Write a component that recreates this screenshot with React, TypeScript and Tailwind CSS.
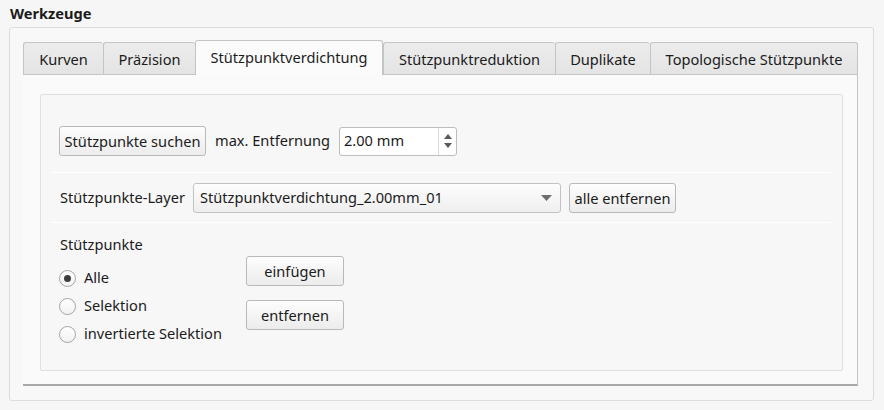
import React from "react";

const tabs = [
  { label: "Kurven", w: "w-[80px]" },
  { label: "Präzision", w: "w-[92px]" },
  { label: "Stützpunktverdichtung", w: "w-[188px]", active: true },
  { label: "Stützpunktreduktion", w: "w-[172px]" },
  { label: "Duplikate", w: "w-[95px]" },
  { label: "Topologische Stützpunkte", w: "w-[208px]", last: true },
];

function Btn({ children, className = "" }: { children: React.ReactNode; className?: string }) {
  return (
    <button
      className={`flex items-center justify-center rounded-[3px] border border-[#b9b9b9] bg-gradient-to-b from-[#fdfdfd] to-[#ececec] leading-none text-[#1b1b1b] ${className}`}
    >
      {children}
    </button>
  );
}

function Radio({ label, checked }: { label: string; checked?: boolean }) {
  return (
    <div className="flex h-[28px] items-center">
      <span className="flex h-[17px] w-[17px] items-center justify-center rounded-full border border-[#a3a3a3] bg-gradient-to-b from-[#ffffff] to-[#f2f2f2]">
        {checked && <span className="h-[7px] w-[7px] rounded-full bg-[#3d3d3d]" />}
      </span>
      <span className="ml-[8px]">{label}</span>
    </div>
  );
}

export default function App() {
  return (
    <div className="h-[410px] w-[884px] overflow-hidden bg-[#f6f6f6] font-['Noto_Sans',sans-serif] text-[14.6px] text-[#1b1b1b]">
      <div className="h-[27px] pl-[10px] pt-[3px] font-bold leading-[20px]">Werkzeuge</div>

      <div className="ml-[9px] h-[374px] w-[865px] rounded-[3px] border border-[#dcdcdc] bg-[#f8f8f8] pl-[13px] pt-[12px]">
        {/* tab bar */}
        <div className="flex h-[34px] items-end">
          {tabs.map((t) =>
            t.active ? (
              <div
                key={t.label}
                className={`relative z-10 -mb-px flex h-[35px] ${t.w} items-start justify-center rounded-t-[3px] border border-b-0 border-[#c4c4c4] bg-[#fbfbfb] pt-[6px] leading-[20px]`}
              >
                {t.label}
              </div>
            ) : (
              <div
                key={t.label}
                className={`flex h-[32px] ${t.w} items-center justify-center rounded-t-[3px] border-l border-t border-[#c4c4c4] bg-gradient-to-b from-[#ececec] to-[#e4e4e4] pt-[3px] ${t.last ? "border-r" : ""}`}
              >
                {t.label}
              </div>
            )
          )}
        </div>

        {/* tab pane */}
        <div className="h-[312px] w-[835px] border-r border-t border-[#c4c4c4] border-b-2 border-b-[#a9a9a9] bg-[#fafafa] pl-[17px] pt-[19px]">
          <div className="h-[277px] w-[803px] rounded-[2px] border border-[#e0e0e0] bg-[#f7f7f7] pt-[31px]">
            {/* row 1 */}
            <div className="flex h-[30px] items-center pl-[18px]">
              <Btn className="h-[30px] w-[147px]">Stützpunkte suchen</Btn>
              <span className="ml-[9px]">max. Entfernung</span>
              <div className="ml-auto mr-[385px] flex h-[29px] w-[118px] items-stretch rounded-[3px] border border-[#bdbdbd] bg-white">
                <span className="flex flex-1 items-center pl-[4px]">2.00 mm</span>
                <span className="flex w-[18px] flex-col items-center justify-center gap-[4px] border-l border-[#dadada]">
                  <svg width="8" height="5" viewBox="0 0 8 5">
                    <path d="M0 5 L4 0 L8 5 Z" fill="#5a5a5a" />
                  </svg>
                  <svg width="8" height="5" viewBox="0 0 8 5">
                    <path d="M0 0 L4 5 L8 0 Z" fill="#5a5a5a" />
                  </svg>
                </span>
              </div>
            </div>

            <div className="ml-[10px] mr-[11px] mt-[16px] h-px bg-white" />

            {/* row 2 */}
            <div className="mt-[10px] flex h-[30px] items-center pl-[19px]">
              <span className="w-[133px]">Stützpunkte-Layer</span>
              <div className="flex h-[30px] w-[368px] items-center justify-between rounded-[3px] border border-[#c2c2c2] bg-gradient-to-b from-[#fdfdfd] to-[#efefef] pl-[6px] pr-[8px]">
                <span>Stützpunktverdichtung_2.00mm_01</span>
                <svg width="11" height="6" viewBox="0 0 11 6">
                  <path d="M0 0 L11 0 L5.5 6 Z" fill="#6e6e6e" />
                </svg>
              </div>
              <Btn className="ml-[8px] h-[30px] w-[107px]">alle entfernen</Btn>
            </div>

            <div className="ml-[10px] mr-[11px] mt-[9px] h-px bg-white" />

            {/* row 3 */}
            <div className="mt-[11px] pl-[19px] leading-[20px]">Stützpunkte</div>
            <div className="flex items-start pl-[18px]">
              <div className="mt-[10px] w-[187px]">
                <Radio label="Alle" checked />
                <Radio label="Selektion" />
                <Radio label="invertierte Selektion" />
              </div>
              <div className="mt-[2px] flex flex-col gap-[14px]">
                <Btn className="h-[30px] w-[98px]">einfügen</Btn>
                <Btn className="h-[30px] w-[98px]">entfernen</Btn>
              </div>
            </div>
          </div>
        </div>
      </div>
    </div>
  );
}
